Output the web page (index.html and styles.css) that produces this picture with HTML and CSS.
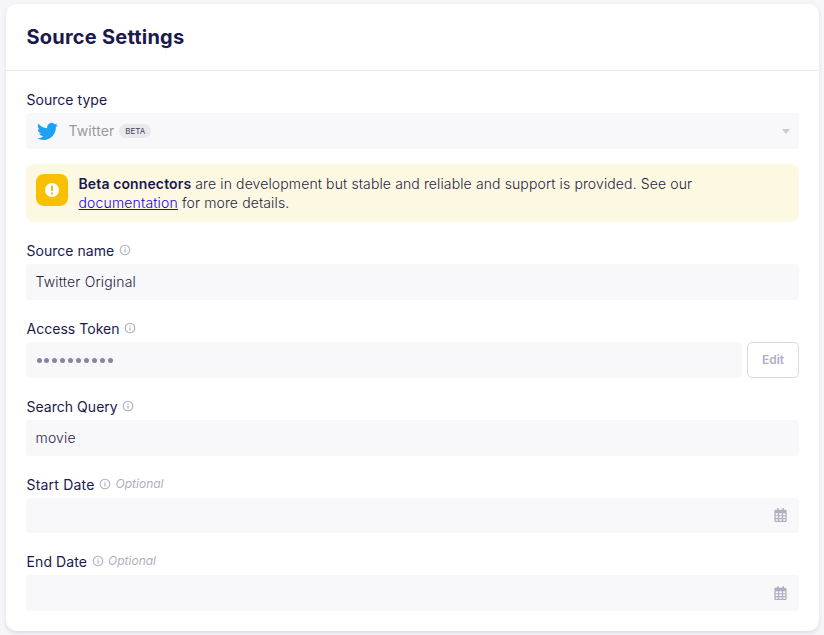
FILE: index.html
```html
<!DOCTYPE html>
<html lang="en">
<head>
<meta charset="utf-8">
<title>Source Settings</title>
<link rel="stylesheet" href="styles.css">
</head>
<body>
<svg width="0" height="0" class="sprite">
  <symbol id="info" viewBox="0 0 12 12"><circle cx="6" cy="6" r="4.800" fill="none" stroke="currentColor" stroke-width="1.100"/><path d="M5.400 5.300h1.200v3.200H5.400zM5.400 3.400h1.200v1.100H5.400z" fill="currentColor"/></symbol>
  <symbol id="calendar" viewBox="0 0 448 512"><path fill="currentColor" d="M96 32v32H48C21.500 64 0 85.500 0 112v48h448v-48c0-26.500-21.500-48-48-48h-48V32c0-17.700-14.300-32-32-32s-32 14.300-32 32v32H160V32c0-17.700-14.300-32-32-32S96 14.300 96 32zM448 160H0v304c0 26.500 21.500 48 48 48h352c26.500 0 48-21.500 48-48V160zM48 192h80v72H48zm128 0h96v72h-96zm144 0h80v72h-80zM48 304h80v64H48zm128 0h96v64h-96zm144 0h80v64h-80zM48 408h80v56H48zm128 0h96v56h-96zm144 0h80v56h-80z" fill-rule="evenodd"/></symbol>
</svg>
<main class="card">
  <header class="card-header"><h1>Source Settings</h1></header>
  <div class="form">
    <section class="field">
      <div class="label">Source type</div>
      <div class="input select">
        <svg class="bird" viewBox="0 0 24 24"><path fill="#1da1f2" d="M23.953 4.570a10 10 0 0 1-2.825.775 4.958 4.958 0 0 0 2.163-2.723c-.951.555-2.005.959-3.127 1.184a4.920 4.920 0 0 0-8.384 4.482C7.690 8.095 4.067 6.130 1.640 3.162a4.822 4.822 0 0 0-.666 2.475c0 1.710.870 3.213 2.188 4.096a4.904 4.904 0 0 1-2.228-.616v.060a4.923 4.923 0 0 0 3.946 4.827 4.996 4.996 0 0 1-2.212.085 4.936 4.936 0 0 0 4.604 3.417 9.867 9.867 0 0 1-6.102 2.105c-.390 0-.779-.023-1.170-.067a13.995 13.995 0 0 0 7.557 2.209c9.053 0 13.998-7.496 13.998-13.985 0-.210 0-.420-.015-.630A9.935 9.935 0 0 0 24 4.590z"/></svg>
        <span class="select-value">Twitter</span><span class="badge">BETA</span>
        <span class="caret"></span>
      </div>
    </section>
    <aside class="notice">
      <span class="notice-icon"><svg viewBox="0 0 14 14"><circle cx="7" cy="7" r="7" fill="#fff"/><path d="M6 2.500h2V8H6zM6 9.600h2v1.900H6z" fill="#f8c000"/></svg></span>
      <p><b>Beta connectors</b> are in development but stable and reliable and support is provided. See our<br><a href="#">documentation</a> for more details.</p>
    </aside>
    <section class="field">
      <div class="label">Source name<svg class="info"><use href="#info"/></svg></div>
      <div class="input text">Twitter Original</div>
    </section>
    <section class="field">
      <div class="label">Access Token<svg class="info"><use href="#info"/></svg></div>
      <div class="secret">
        <div class="input dots"><i></i><i></i><i></i><i></i><i></i><i></i><i></i><i></i><i></i><i></i></div>
        <button class="edit">Edit</button>
      </div>
    </section>
    <section class="field">
      <div class="label">Search Query<svg class="info"><use href="#info"/></svg></div>
      <div class="input text">movie</div>
    </section>
    <section class="field start">
      <div class="label"><span>Start Date</span><svg class="info"><use href="#info"/></svg><em>Optional</em></div>
      <div class="input date"><svg class="calendar"><use href="#calendar"/></svg></div>
    </section>
    <section class="field">
      <div class="label"><span>End Date</span><svg class="info"><use href="#info"/></svg><em>Optional</em></div>
      <div class="input date"><svg class="calendar"><use href="#calendar"/></svg></div>
    </section>
  </div>
</main>
</body>
</html>
```
FILE: styles.css
```css
* { box-sizing: border-box; }
body {
  margin: 0;
  padding: 4px 5px 4px 6px;
  height: 635px;
  overflow: hidden;
  background: #f6f6f9;
  color: #1a194d;
  font: 14px/19px Inter, "Liberation Sans", sans-serif;
}
.sprite { display: block; }
.card {
  height: 627px;
  background: #fff;
  border-radius: 10px;
  box-shadow: 0 2px 4px rgba(26, 25, 77, .12);
}
.card-header {
  height: 67px;
  padding: 20px 20.500px 0;
  border-bottom: 1px solid #e8e8ed;
}
h1 { margin: 0; font-size: 20px; line-height: 26px; font-weight: 700; letter-spacing: .22px; }
.form { padding: 18px 20px 0; }
.field { margin-bottom: 18px; }
.label {
  display: flex;
  align-items: center;
  height: 24px;
  padding: 0 0 3px .5px;
  letter-spacing: .03px;
}
.info { width: 12px; height: 12px; margin: -1px 0 0 4.500px; color: #afafc1; }
.label em { margin: -2px 0 0 4.500px; font-size: 12px; letter-spacing: 0; color: #afafc1; }
.label span { letter-spacing: .1px; }
.start .label span { letter-spacing: .2px; }
.input {
  display: flex;
  align-items: center;
  height: 36px;
  padding: 0 10px;
  border-radius: 4px;
  background: #f8f8fa;
  color: #3f3e5c;
}
.text { padding: 0 9.500px 2px; font-weight: 300; letter-spacing: .18px; color: #1f1e45; }
.select { padding: 0 9px 0 11px; color: #999; }
.bird { width: 21px; height: 21px; }
.select-value { margin: -1px 0 0 10.500px; letter-spacing: .1px; }
.badge {
  margin-left: 5px;
  width: 32px;
  border-radius: 7px;
  background: #e8e8ed;
  color: #3f3e5c;
  font-size: 8px;
  line-height: 14px;
  text-align: center;
}
.caret {
  margin-left: auto;
  border: 4px solid transparent;
  border-top: 5px solid #ccc;
  border-bottom: 0;
}
.notice {
  display: flex;
  height: 58px;
  margin: -3px 0 18px;
  padding: 10px;
  border-radius: 8px;
  background: #fdf8e1;
}
.notice p { margin: 0 0 0 10.500px; color: #1f1e45; font-weight: 300; letter-spacing: .12px; white-space: nowrap; }
.notice b { color: #1a194d; font-weight: 600; }
.notice a { color: #1a00e8; letter-spacing: .16px; }
.notice-icon {
  display: grid;
  place-items: center;
  width: 32px;
  height: 32px;
  border-radius: 8px;
  background: #f8c000;
}
.notice-icon svg { width: 14px; height: 14px; }
.secret { display: flex; gap: 5px; }
.secret .input { flex: 1; }
.dots { gap: 2.900px; padding: 1px 10.500px 0; }
.dots i { width: 5px; height: 5px; border-radius: 50%; background: #8584a0; }
.edit {
  width: 52px;
  height: 36px;
  padding: 0 0 2px;
  border: 1px solid #d9d9e2;
  border-radius: 5px;
  background: #fff;
  color: #afafc1;
  font: 600 12px/15px Inter, sans-serif;
}
.start .input { height: 35px; padding-bottom: 1px; }
.date { justify-content: flex-end; padding-right: 12px; }
.calendar { width: 13px; height: 14px; color: #afafc1; }
```
